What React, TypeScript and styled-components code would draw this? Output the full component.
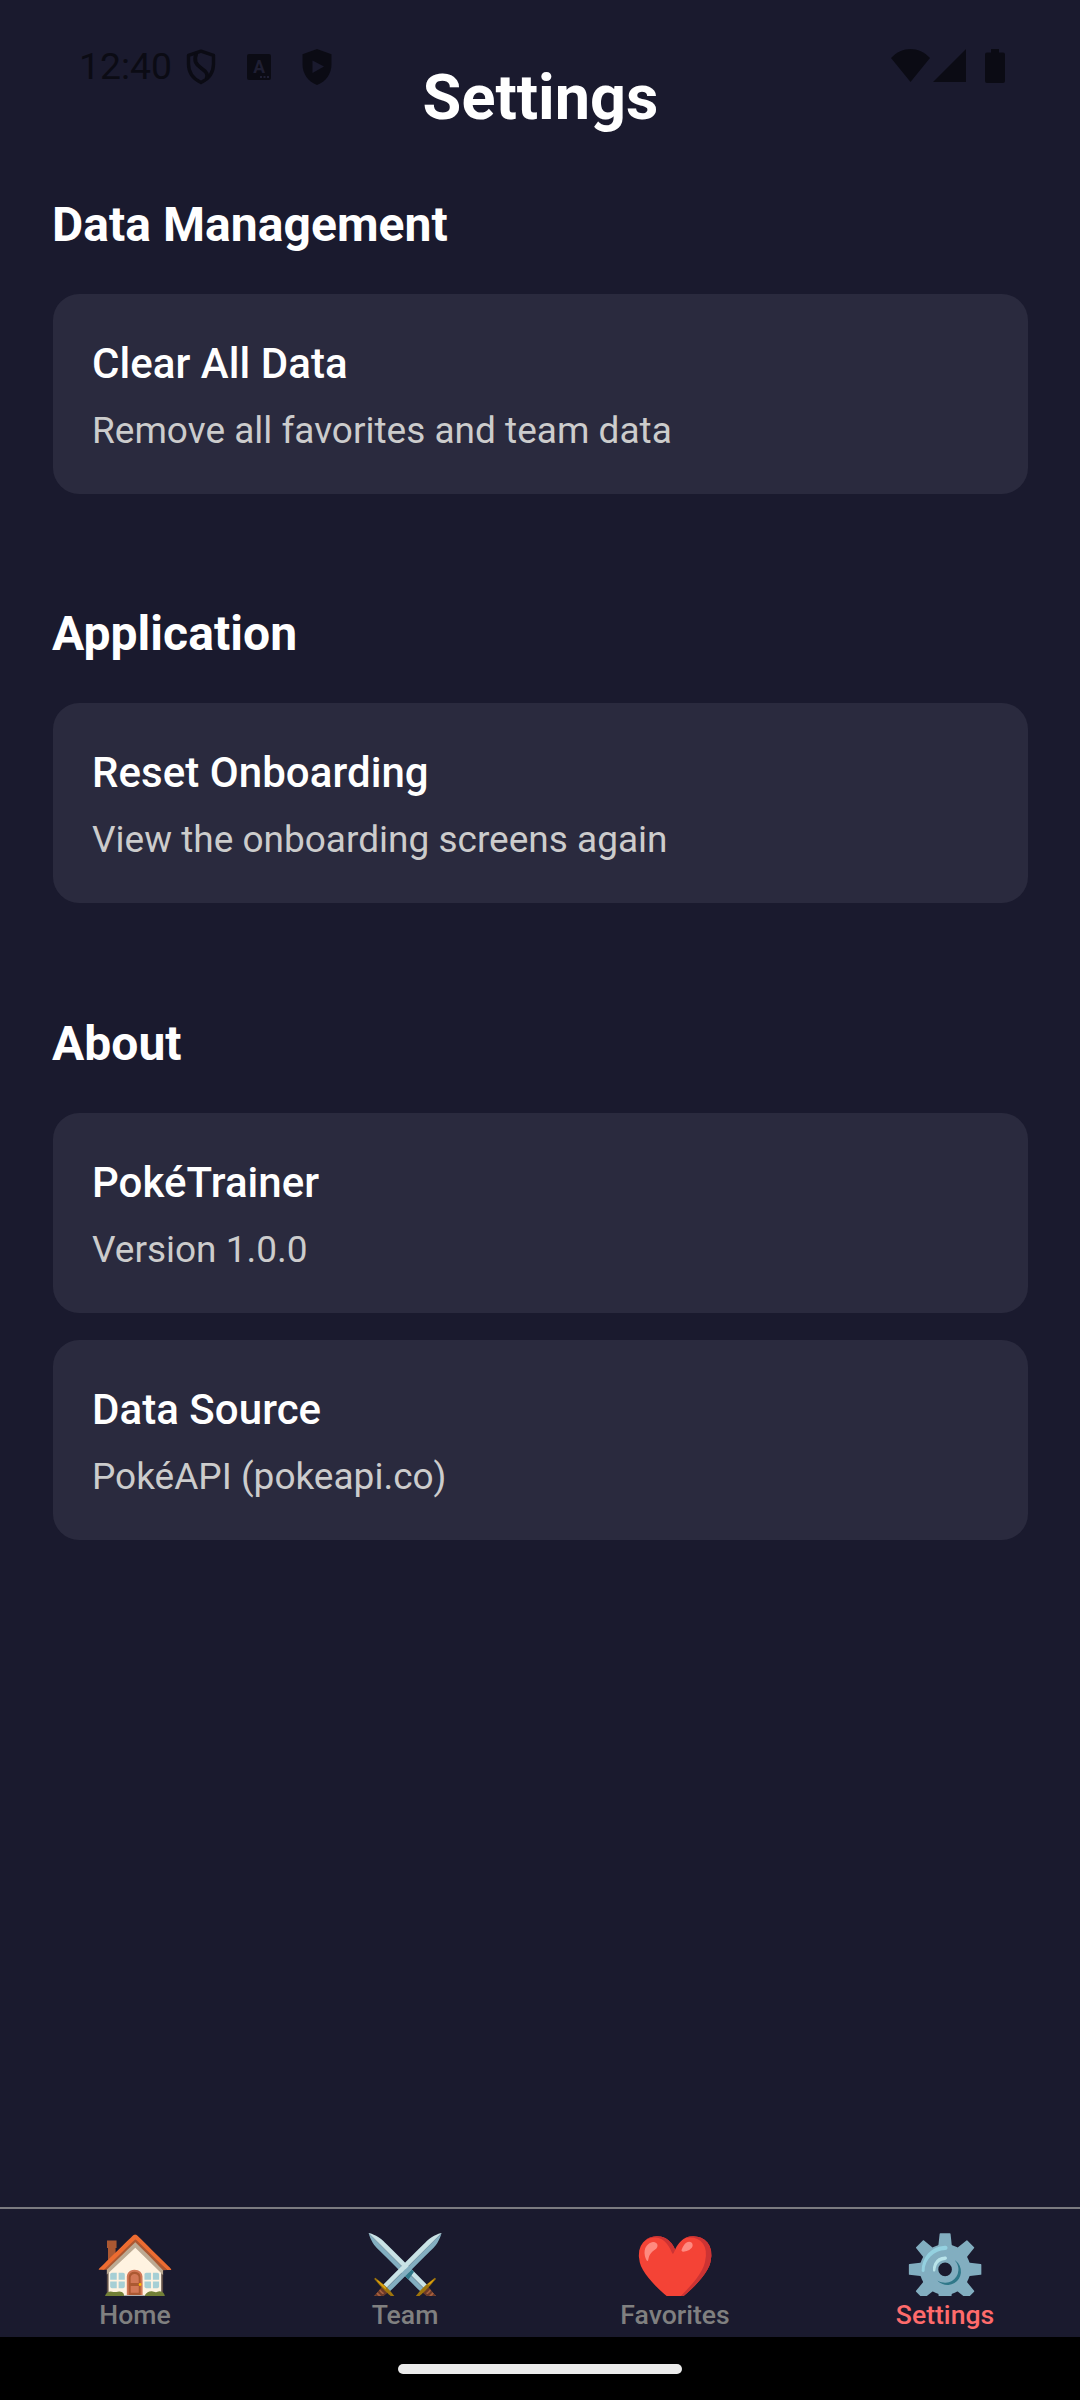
import React from "react";
import styled, { createGlobalStyle } from "styled-components";

const GlobalStyle = createGlobalStyle`
  * { box-sizing: border-box; }
  body { margin: 0; background: #1a1a2e; font-family: Roboto, sans-serif; }
`;

const ink = "#0b0b14";

const Screen = styled.div`
  position: relative;
  display: flex;
  flex-direction: column;
  width: 1080px;
  height: 2400px;
  overflow: hidden;
  background: #1a1a2e;
`;

const StatusBar = styled.div`
  position: absolute;
  top: 0;
  left: 0;
  display: flex;
  align-items: center;
  justify-content: space-between;
  width: 100%;
  height: 134px;
  padding: 0 75px 0 79px;
`;

const StatusGroup = styled.div<{ $lift?: number }>`
  display: flex;
  align-items: center;
  padding-bottom: ${(p) => p.$lift ?? 0}px;
`;

const Clock = styled.span`
  width: 107px;
  margin-top: -2px;
  color: ${ink};
  font-size: 37.4px;
  line-height: 44px;
  white-space: nowrap;
`;

const StatusIcon = styled.svg<{ $gap?: number }>`
  display: block;
  margin-left: ${(p) => p.$gap ?? 0}px;
`;

const Header = styled.header`
  height: 134px;
  padding: 61px 0 0 1px;
`;

const Title = styled.h1`
  margin: 0;
  color: #fff;
  font-size: 63px;
  line-height: 73px;
  font-weight: 700;
  text-align: center;
`;

const Content = styled.main`
  flex: 1;
  display: flex;
  flex-direction: column;
  gap: 111.4px;
  padding: 62px 52.5px 0;
`;

const Section = styled.section`
  display: flex;
  flex-direction: column;
`;

const Heading = styled.h2`
  margin: 0 0 41px -0.6px;
  color: #fff;
  font-size: 48px;
  line-height: 57px;
  font-weight: 700;
  letter-spacing: 0.06px;
`;

const Cards = styled.div`
  display: flex;
  flex-direction: column;
  gap: 27px;
`;

const Card = styled.div`
  display: flex;
  flex-direction: column;
  gap: 12px;
  padding: 39px 39.5px;
  border-radius: 26.25px;
  background: #2a2a3e;
`;

const CardTitle = styled.div`
  color: #fff;
  font-size: 42px;
  line-height: 61px;
  font-weight: 500;
  letter-spacing: 0.05px;
`;

const CardText = styled.div`
  color: #ccc;
  font-size: 37px;
  line-height: 49px;
`;

const TabBar = styled.nav`
  display: flex;
  height: 130px;
  border-top: 2px solid #7b7b80;
`;

const Tab = styled.div`
  flex: 1;
  display: flex;
  flex-direction: column;
  align-items: center;
`;

const TabIcon = styled.div`
  width: 82px;
  height: 87px;
  padding-top: 22px;
  overflow: hidden;
  color: #fff;
  font-size: 66px;
  line-height: 77px;
  white-space: nowrap;
`;

const TabLabel = styled.span<{ $active?: boolean }>`
  color: ${(p) => (p.$active ? "#ff6b6b" : "#808080")};
  font-size: 26.6px;
  line-height: 38px;
  font-weight: 500;
`;

const GestureBar = styled.div`
  display: flex;
  justify-content: center;
  height: 63px;
  padding-top: 27px;
  background: #000;
`;

const Handle = styled.div`
  width: 284px;
  height: 10px;
  border-radius: 5px;
  background: #ebebeb;
`;

const sections = [
  { title: "Data Management", cards: [["Clear All Data", "Remove all favorites and team data"]] },
  { title: "Application", cards: [["Reset Onboarding", "View the onboarding screens again"]] },
  { title: "About", cards: [["PokéTrainer", "Version 1.0.0"], ["Data Source", "PokéAPI (pokeapi.co)"]] },
];

const tabs = [
  { label: "Home", icon: "🏠" },
  { label: "Team", icon: "⚔️" },
  { label: "Favorites", icon: "❤️" },
  { label: "Settings", icon: "⚙️", active: true },
];

export default function App() {
  return (
    <Screen>
      <GlobalStyle />
      <Header><Title>Settings</Title></Header>
      <StatusBar>
        <StatusGroup>
          <Clock>12:40</Clock>
          <StatusIcon width="30" height="36" viewBox="0 0 30 36" fill="none" stroke={ink} strokeWidth="3.4" strokeLinejoin="round">
            <path d="M15 2.2 L27.5 6.4 V15 C27.5 23.5 22.5 30 15 33.5 C7.5 30 2.5 23.5 2.5 15 V6.4 Z" />
            <path d="M10.3 4.5 C7.5 12 10 15.5 15 19 C21.5 23.5 22 26 20.5 29.5" strokeWidth="3.8" />
          </StatusIcon>
          <StatusIcon $gap={31} width="24" height="26" viewBox="0 0 24 26">
            <rect width="24" height="26" rx="2" fill={ink} />
            <text x="12.2" y="18.5" fill="#1f1f33" fontSize="17.5" fontWeight="700" textAnchor="middle">A</text>
            <path d="M13 23 h2 m1.5 0 h2 m1.5 0 h2" stroke="#1f1f33" strokeWidth="2" />
          </StatusIcon>
          <StatusIcon $gap={31} width="30" height="36" viewBox="0 0 30 36">
            <path d="M15 0 L29.5 5.2 V15 C29.5 25 24 32.5 15 36 C6 32.5 .5 25 .5 15 V5.2 Z" fill={ink} />
            <path d="M10.5 11.5 L22 17.5 L10.5 24 Z" fill="#1a1a2e" />
          </StatusIcon>
        </StatusGroup>
        <StatusGroup $lift={2}>
          <StatusIcon width="39" height="34" viewBox="0 0 39 34" fill={ink}>
            <path d="M0 9 C11 -3 28 -3 39 9 L19.5 33 Z" />
          </StatusIcon>
          <StatusIcon $gap={3} width="33" height="34" viewBox="0 0 33 34" fill={ink}>
            <path d="M0 33 L33 0 V33 Z" />
          </StatusIcon>
          <StatusIcon $gap={19} width="20" height="34" viewBox="0 0 20 34" fill={ink}>
            <path d="M6 0 H14 V3.5 H18 Q20 3.5 20 5.5 V32 Q20 34 18 34 H2 Q0 34 0 32 V5.5 Q0 3.5 2 3.5 H6 Z" />
          </StatusIcon>
        </StatusGroup>
      </StatusBar>
      <Content>
        {sections.map((s) => (
          <Section key={s.title}>
            <Heading>{s.title}</Heading>
            <Cards>
              {s.cards.map(([title, text]) => (
                <Card key={title}>
                  <CardTitle>{title}</CardTitle>
                  <CardText>{text}</CardText>
                </Card>
              ))}
            </Cards>
          </Section>
        ))}
      </Content>
      <TabBar>
        {tabs.map((t) => (
          <Tab key={t.label}>
            <TabIcon>{t.icon}</TabIcon>
            <TabLabel $active={t.active}>{t.label}</TabLabel>
          </Tab>
        ))}
      </TabBar>
      <GestureBar><Handle /></GestureBar>
    </Screen>
  );
}
